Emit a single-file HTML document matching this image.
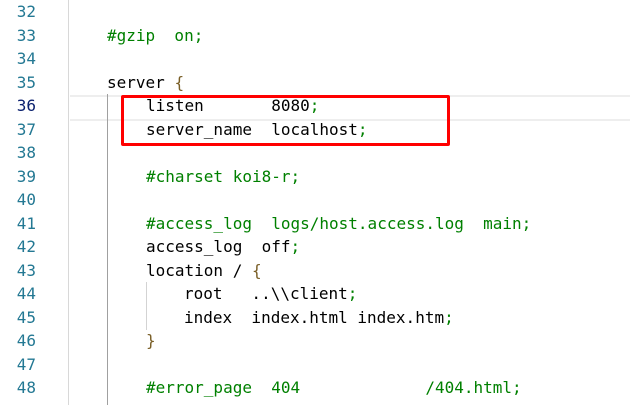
<!DOCTYPE html>
<html><head><meta charset="utf-8"><style>
html,body{margin:0;padding:0;background:#fff;width:630px;height:405px;overflow:hidden;position:relative}
.ln{position:absolute;left:0;width:36px;text-align:right;font:16px "DejaVu Sans Mono",monospace;color:#237893;height:24px;line-height:24px}
.c{position:absolute;font:16px "DejaVu Sans Mono",monospace;color:#000;white-space:pre;height:24px;line-height:24px}
.g{color:#008000}.b{color:#795e26}
</style></head><body>
<div style="position:absolute;left:68px;top:0;width:1px;height:405px;background:#d8d8d8"></div>
<div style="position:absolute;left:70px;top:95px;width:560px;height:22px;border-top:2px solid #eee;border-bottom:2px solid #eee"></div>
<div style="position:absolute;left:107px;top:94px;width:1px;height:311px;background:#a0a0a0"></div>
<div style="position:absolute;left:146px;top:282px;width:1px;height:48px;background:#d3d3d3"></div>
<div style="position:absolute;left:121px;top:95px;width:323px;height:45px;border:3px solid #f00;border-radius:2px"></div>

<div class="ln" style="top:0px">32</div>
<div class="ln" style="top:23.5px">33</div>
<div class="ln" style="top:47px">34</div>
<div class="ln" style="top:70.5px">35</div>
<div class="ln" style="top:94px;color:#0b216f">36</div>
<div class="ln" style="top:117.5px">37</div>
<div class="ln" style="top:141px">38</div>
<div class="ln" style="top:164.5px">39</div>
<div class="ln" style="top:188px">40</div>
<div class="ln" style="top:211.5px">41</div>
<div class="ln" style="top:235px">42</div>
<div class="ln" style="top:258.5px">43</div>
<div class="ln" style="top:282px">44</div>
<div class="ln" style="top:305.5px">45</div>
<div class="ln" style="top:329px">46</div>
<div class="ln" style="top:352.5px">47</div>
<div class="ln" style="top:376px">48</div>

<div class="c g" style="left:107px;top:23.5px">#gzip  on;</div>
<div class="c" style="left:107px;top:70.5px">server <span class="b">{</span></div>
<div class="c" style="left:146px;top:94px">listen       8080<span class="g">;</span></div>
<div class="c" style="left:146px;top:117.5px">server_name  localhost<span class="g">;</span></div>
<div class="c g" style="left:146px;top:164.5px">#charset koi8-r;</div>
<div class="c g" style="left:146px;top:211.5px">#access_log  logs/host.access.log  main;</div>
<div class="c" style="left:146px;top:235px">access_log  off<span class="g">;</span></div>
<div class="c" style="left:146px;top:258.5px">location / <span class="b">{</span></div>
<div class="c" style="left:184px;top:282px">root   ..\\client<span class="g">;</span></div>
<div class="c" style="left:184px;top:305.5px">index  index.html index.htm<span class="g">;</span></div>
<div class="c b" style="left:146px;top:329px">}</div>
<div class="c g" style="left:146px;top:376px">#error_page  404             /404.html;</div>
</body></html>
